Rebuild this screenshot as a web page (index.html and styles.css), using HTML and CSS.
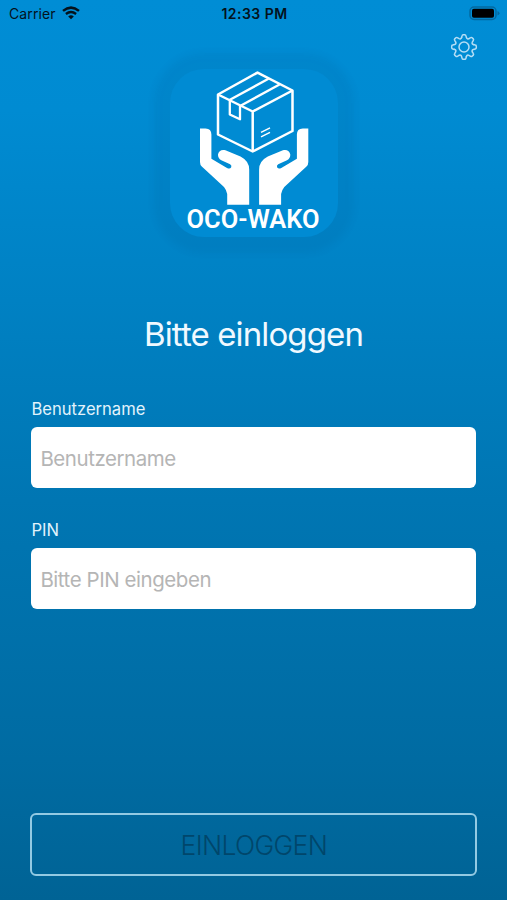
FILE: index.html
```html
<!DOCTYPE html>
<html lang="de">
<head>
<meta charset="utf-8">
<meta name="viewport" content="width=device-width, initial-scale=1">
<title>OCO-WAKO</title>
<link rel="stylesheet" href="styles.css">
</head>
<body>
<div class="screen">
  <header class="status">
    <div class="status-left">
      <span class="carrier">Carrier</span>
      <svg class="wifi" width="18" height="14" viewBox="0 0 18 14" fill="none" stroke="#04121c">
        <path d="M1 4.9Q9 -1.7 17 4.9" stroke-width="2.5"/>
        <path d="M3.9 8Q9 3.9 14.1 8" stroke-width="2.3"/>
        <path d="M9 13.3L6.2 10.5Q9 8.2 11.8 10.5Z" fill="#04121c" stroke="none"/>
      </svg>
    </div>
    <span class="time">12:33 PM</span>
    <svg class="battery" width="31" height="15" viewBox="0 0 31 15">
      <rect x="1" y="1" width="26" height="12.5" rx="4" fill="none" stroke="#0369a0" stroke-width="1.5"/>
      <rect x="3" y="2.7" width="22" height="9" rx="1.8" fill="#000"/>
      <path d="M28.5 5Q30.5 5.8 30.5 7.2T28.5 9.5Z" fill="#0369a0"/>
    </svg>
  </header>
  <div class="toolbar">
    <button class="settings" aria-label="Einstellungen">
      <svg width="28" height="28" viewBox="-14 -14 28 28" fill="none" stroke="#b5def5" stroke-width="1.5" stroke-linecap="round">
        <defs><path id="tooth" d="M-2.4-9.4L-1.9-11.3Q-1.7-12.3-.8-12.3H.8Q1.7-12.3 1.9-11.3L2.4-9.4Q3.1-7.5 4.95-8.34"/></defs>
        <use href="#tooth"/>
        <use href="#tooth" transform="rotate(45)"/>
        <use href="#tooth" transform="rotate(90)"/>
        <use href="#tooth" transform="rotate(135)"/>
        <use href="#tooth" transform="rotate(180)"/>
        <use href="#tooth" transform="rotate(225)"/>
        <use href="#tooth" transform="rotate(270)"/>
        <use href="#tooth" transform="rotate(315)"/>
        <circle r="5"/>
      </svg>
    </button>
  </div>
  <div class="logo">
    <svg width="168" height="168" viewBox="170 69 168 168">
      <g fill="none" stroke="#fff" stroke-width="2.5" stroke-linejoin="round">
        <path d="M257.5 72.6L292.5 90.5V131L252.7 151.5L218 134.5V94.5Z"/>
        <path d="M218 94.5L252.7 111.5L292.5 90.5M252.7 111.5V151.5"/>
        <path d="M229.5 100L268.5 78.8M241 105.5L279.5 84.5" stroke-width="2.3"/>
        <path d="M229.8 100.5V114.5L240 119.3V105.5" stroke-width="2.3"/>
        <path d="M261 132.3L270 127.8M261 136.8L270 132.3" stroke-width="1.5"/>
      </g>
      <g fill="#fff">
        <path id="hand" d="M200 128.4H205.5Q211.4 128.4 211.4 134.5V158.8L227 168Q229.8 169.4 231.1 167.6Q232.2 165.4 230.1 164.2L221.3 160.3Q217.8 158.4 218 154.6C218.4 150.7 222 149.2 225.4 150.3L240.5 156.5Q249.2 161 249.2 169.5V204.7H227.2V194Q226.6 190.2 224 187L201.8 166.5Q200 164.8 200 162Z"/>
        <use href="#hand" transform="translate(508.3 0) scale(-1 1)"/>
      </g>
      <text class="brand" x="186.5" y="227.7" textLength="133" lengthAdjust="spacingAndGlyphs">OCO-WAKO</text>
    </svg>
  </div>
  <h1 class="title">Bitte einloggen</h1>
  <form class="form">
    <label class="label" for="user">Benutzername</label>
    <input class="input user" id="user" type="text" placeholder="Benutzername">
    <label class="label" for="pin">PIN</label>
    <input class="input" id="pin" type="password" placeholder="Bitte PIN eingeben">
    <button class="submit" type="button">EINLOGGEN</button>
  </form>
</div>
</body>
</html>
```
FILE: styles.css
```css
* {
  box-sizing: border-box;
}

body {
  margin: 0;
  font-family: Inter, "Liberation Sans", sans-serif;
}

.screen {
  display: flex;
  flex-direction: column;
  height: 900px;
  overflow: hidden;
  background: linear-gradient(#008dd5 0, #008bd2 110px, #0081c3 300px, #0076b3 500px, #006ba2 760px, #006395 900px);
}

.status {
  display: grid;
  grid-template-columns: 1fr auto 1fr;
  align-items: center;
  height: 28px;
  padding: 0 7px 1px 9px;
  color: #04121c;
}

.status-left {
  display: flex;
  align-items: center;
  gap: 6px;
}

.carrier {
  font-size: 14px;
  letter-spacing: 0.1px;
}

.wifi {
  margin-top: -1px;
}

.time {
  font-size: 14px;
  font-weight: 600;
  letter-spacing: 0.45px;
}

.battery {
  justify-self: end;
}

.toolbar {
  display: flex;
  justify-content: flex-end;
  height: 41px;
  padding: 5px 29px 0 0;
}

.settings {
  width: 28px;
  height: 28px;
  padding: 0;
  border: 0;
  background: none;
}

.settings svg,
.logo svg {
  display: block;
}

.logo {
  align-self: center;
  width: 168px;
  height: 168px;
  border-radius: 34px;
  background: #008bd3;
  box-shadow: 0 0 7px 16px rgba(0, 60, 110, 0.08);
}

.brand {
  font: 600 25px Roboto, "Liberation Sans", sans-serif;
  fill: #fff;
}

.title {
  margin: 76px 0 0;
  color: #f0f9ff;
  font-size: 33px;
  font-weight: 400;
  line-height: 42px;
  letter-spacing: -0.88px;
  text-align: center;
}

.form {
  display: flex;
  flex: 1;
  flex-direction: column;
  padding: 44px 31px 24px 31.4px;
}

.label {
  height: 28px;
  color: #e2f3fc;
  font-size: 16.6px;
  line-height: 20px;
}

.input {
  width: 100%;
  height: 61px;
  padding: 1px 9px 0;
  border: 0;
  border-radius: 6px;
  background: #fff;
  color: #222;
  font: 20.5px Inter, "Liberation Sans", sans-serif;
  letter-spacing: -0.45px;
}

.input::placeholder {
  color: #b5b5b5;
  opacity: 1;
}

.user {
  margin-bottom: 32px;
}

.submit {
  width: 447px;
  height: 63px;
  margin: auto 0 0 -1px;
  border: 2px solid #93cae3;
  border-radius: 6px;
  background: transparent;
  color: #00466b;
  font: 300 26.5px Inter, "Liberation Sans", sans-serif;
  letter-spacing: -0.65px;
}
```
